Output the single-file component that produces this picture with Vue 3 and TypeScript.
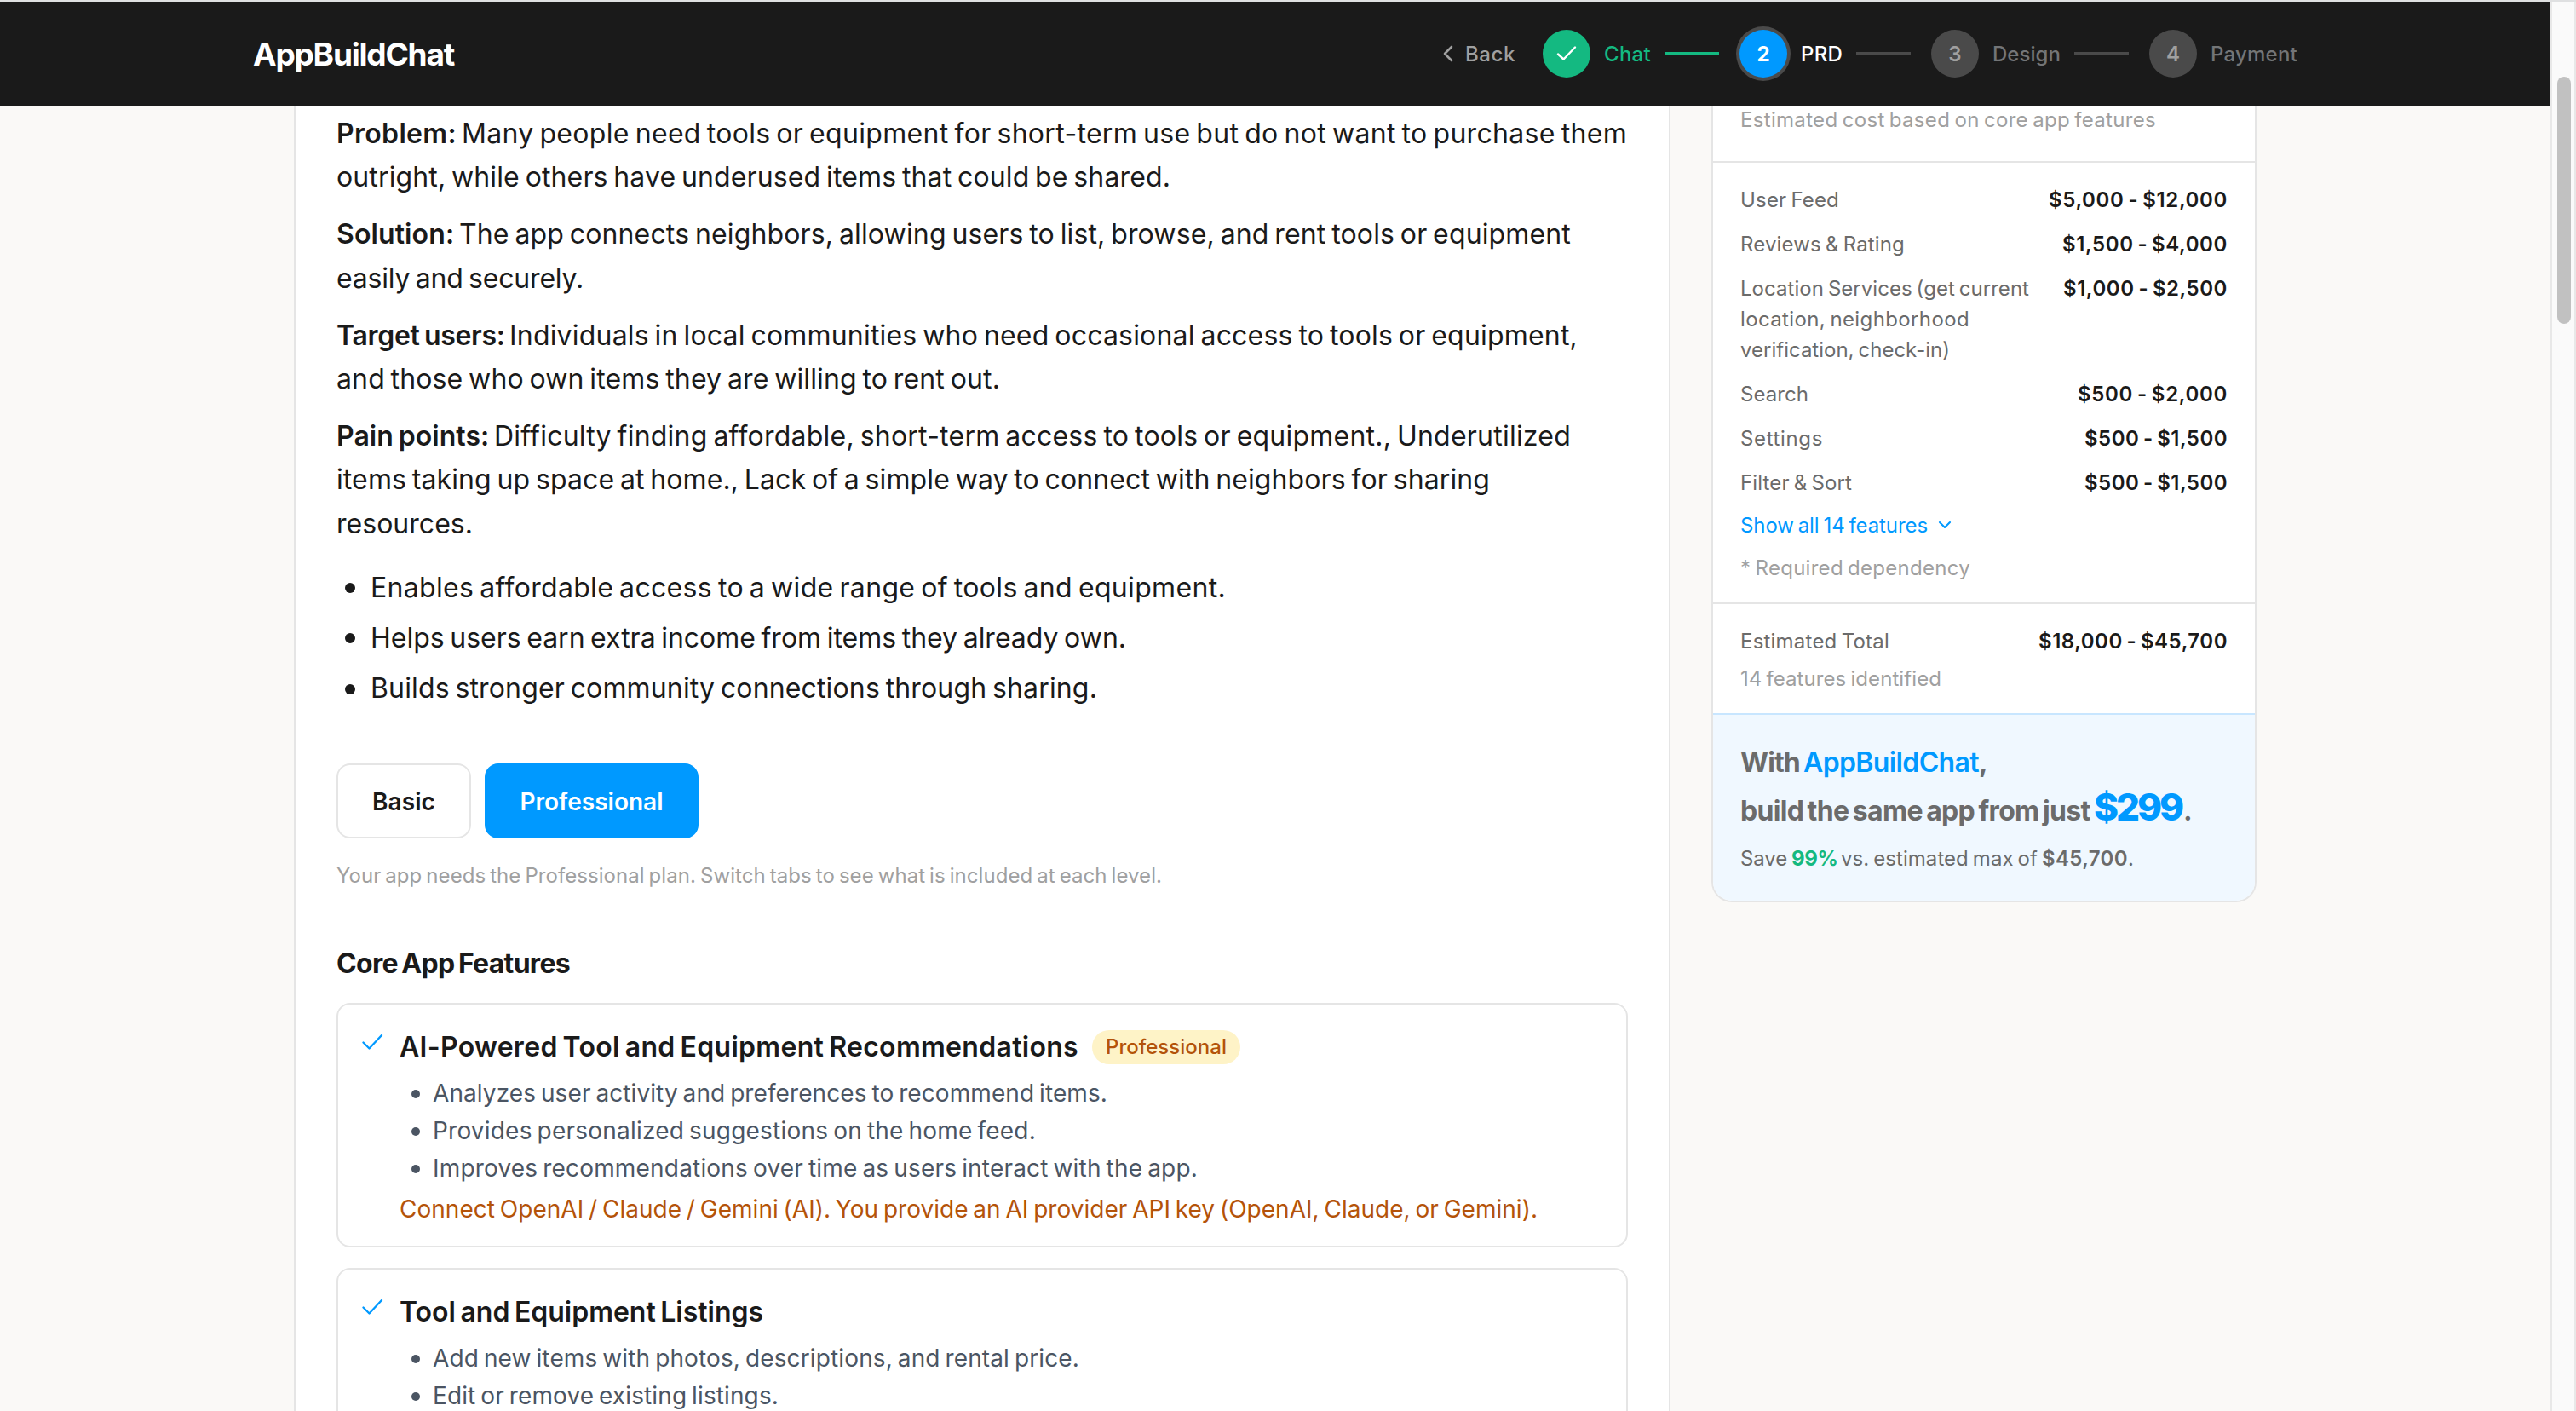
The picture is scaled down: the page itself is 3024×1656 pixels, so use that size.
<script setup lang="ts">
interface Run {
  text: string
  width: number
  strong?: boolean
}

interface Step {
  mark: string
  label: string
  width: number
  state: 'done' | 'current' | 'pending'
}

interface Feature {
  title: string
  titleWidth: number
  badge?: string
  points: Run[]
  note?: Run
}

interface CostRow {
  name: Run[]
  price: string
  width: number
}

// Tracks a run of text so that it takes up the given measure.
const vFit = {
  mounted(el: HTMLElement, binding: { value: number }) {
    const natural = el.getBoundingClientRect().width
    const count = (el.textContent ?? '').length
    if (count > 0) {
      el.style.letterSpacing = `${((binding.value - natural) / count).toFixed(4)}px`
    }
  },
}

const steps: Step[] = [
  { mark: '', label: 'Chat', width: 55, state: 'done' },
  { mark: '2', label: 'PRD', width: 49, state: 'current' },
  { mark: '3', label: 'Design', width: 80, state: 'pending' },
  { mark: '4', label: 'Payment', width: 102, state: 'pending' },
]

const paragraphs: Run[][][] = [
  [
    [
      { text: 'Problem: ', width: 147, strong: true },
      { text: 'Many people need tools or equipment for short-term use but do not want to purchase them', width: 1368 },
    ],
    [{ text: 'outright, while others have underused items that could be shared.', width: 979 }],
  ],
  [
    [
      { text: 'Solution: ', width: 144, strong: true },
      { text: 'The app connects neighbors, allowing users to list, browse, and rent tools or equipment', width: 1305 },
    ],
    [{ text: 'easily and securely.', width: 290 }],
  ],
  [
    [
      { text: 'Target users: ', width: 203, strong: true },
      { text: 'Individuals in local communities who need occasional access to tools or equipment,', width: 1254 },
    ],
    [{ text: 'and those who own items they are willing to rent out.', width: 779 }],
  ],
  [
    [
      { text: 'Pain points: ', width: 185, strong: true },
      { text: 'Difficulty finding affordable, short-term access to tools or equipment., Underutilized', width: 1264 },
    ],
    [{ text: 'items taking up space at home., Lack of a simple way to connect with neighbors for sharing', width: 1354 }],
    [{ text: 'resources.', width: 160 }],
  ],
]

const benefits: Run[] = [
  { text: 'Enables affordable access to a wide range of tools and equipment.', width: 1004 },
  { text: 'Helps users earn extra income from items they already own.', width: 887 },
  { text: 'Builds stronger community connections through sharing.', width: 853 },
]

const features: Feature[] = [
  {
    title: 'AI-Powered Tool and Equipment Recommendations',
    titleWidth: 797,
    badge: 'Professional',
    points: [
      { text: 'Analyzes user activity and preferences to recommend items.', width: 792 },
      { text: 'Provides personalized suggestions on the home feed.', width: 708 },
      { text: 'Improves recommendations over time as users interact with the app.', width: 898 },
    ],
    note: {
      text: 'Connect OpenAI / Claude / Gemini (AI). You provide an AI provider API key (OpenAI, Claude, or Gemini).',
      width: 1336,
    },
  },
  {
    title: 'Tool and Equipment Listings',
    titleWidth: 427,
    points: [
      { text: 'Add new items with photos, descriptions, and rental price.', width: 759 },
      { text: 'Edit or remove existing listings.', width: 406 },
    ],
  },
]

const costs: CostRow[] = [
  { name: [{ text: 'User Feed', width: 116 }], price: '$5,000 - $12,000', width: 210 },
  { name: [{ text: 'Reviews & Rating', width: 193 }], price: '$1,500 - $4,000', width: 194 },
  {
    name: [
      { text: 'Location Services (get current', width: 339 },
      { text: 'location, neighborhood', width: 269 },
      { text: 'verification, check-in)', width: 246 },
    ],
    price: '$1,000 - $2,500',
    width: 193,
  },
  { name: [{ text: 'Search', width: 80 }], price: '$500 - $2,000', width: 176 },
  { name: [{ text: 'Settings', width: 97 }], price: '$500 - $1,500', width: 168 },
  { name: [{ text: 'Filter & Sort', width: 131 }], price: '$500 - $1,500', width: 168 },
]
</script>

<template>
  <div class="window">
    <div class="page">
      <header class="topbar">
        <div class="topbar-inner">
          <span v-fit="236" class="brand">AppBuildChat</span>
          <nav class="stepper">
            <a class="back">
              <svg class="back-icon" width="16" height="22" viewBox="0 0 16 22" fill="none">
                <path d="M12 3 L4 11 L12 19" stroke="currentColor" stroke-width="2.6" stroke-linecap="round" stroke-linejoin="round" />
              </svg>
              <span v-fit="59" class="back-label">Back</span>
            </a>
            <div v-for="(step, i) in steps" :key="step.label" class="step" :class="step.state">
              <span class="dot">
                <svg v-if="step.state === 'done'" width="28" height="28" viewBox="0 0 28 28" fill="none">
                  <path d="M4 14.5 L10.5 20.5 L24 6.5" stroke="#fff" stroke-width="2.4" stroke-linecap="round" stroke-linejoin="round" />
                </svg>
                <span v-else class="mark">{{ step.mark }}</span>
              </span>
              <span v-fit="step.width" class="step-label">{{ step.label }}</span>
              <span v-if="i < steps.length - 1" class="bar"></span>
            </div>
          </nav>
        </div>
      </header>

      <main class="content">
        <article class="doc">
          <div v-for="(para, p) in paragraphs" :key="p" class="para">
            <div v-for="(line, l) in para" :key="l" class="line">
              <span v-for="run in line" :key="run.text" v-fit="run.width" class="run" :class="{ strong: run.strong }">{{ run.text }}</span>
            </div>
          </div>

          <ul class="benefits">
            <li v-for="item in benefits" :key="item.text">
              <span v-fit="item.width" class="run">{{ item.text }}</span>
            </li>
          </ul>

          <div class="tabs">
            <button class="tab basic"><span v-fit="74" class="run">Basic</span></button>
            <button class="tab active"><span v-fit="168" class="run">Professional</span></button>
          </div>
          <p class="hint"><span v-fit="969" class="run">Your app needs the Professional plan. Switch tabs to see what is included at each level.</span></p>

          <h2 class="section"><span v-fit="274" class="run">Core App Features</span></h2>

          <section v-for="feature in features" :key="feature.title" class="feature">
            <svg class="tick" width="26" height="20" viewBox="0 0 26 20" fill="none">
              <path d="M1.5 10.5 L8.5 17.5 L23 2" stroke="#0099ff" stroke-width="2.3" stroke-linecap="round" stroke-linejoin="round" />
            </svg>
            <div class="feature-body">
              <div class="feature-head">
                <h3 v-fit="feature.titleWidth" class="run">{{ feature.title }}</h3>
                <span v-if="feature.badge" class="badge"><span v-fit="142" class="run">{{ feature.badge }}</span></span>
              </div>
              <ul class="points">
                <li v-for="point in feature.points" :key="point.text">
                  <span v-fit="point.width" class="run">{{ point.text }}</span>
                </li>
              </ul>
              <p v-if="feature.note" class="note"><span v-fit="feature.note.width" class="run">{{ feature.note.text }}</span></p>
            </div>
          </section>
        </article>

        <aside class="estimate">
          <div class="estimate-head"><span v-fit="488" class="run">Estimated cost based on core app features</span></div>
          <div class="estimate-list">
            <div v-for="row in costs" :key="row.name[0].text" class="cost">
              <div class="cost-name">
                <div v-for="line in row.name" :key="line.text"><span v-fit="line.width" class="run">{{ line.text }}</span></div>
              </div>
              <span v-fit="row.width" class="run price">{{ row.price }}</span>
            </div>
            <a class="show-all">
              <span v-fit="220" class="run">Show all 14 features</span>
              <svg width="16" height="12" viewBox="0 0 16 12" fill="none">
                <path d="M2 2 L8 8 L14 2" stroke="currentColor" stroke-width="2.1" stroke-linecap="round" stroke-linejoin="round" />
              </svg>
            </a>
            <div class="muted required"><span v-fit="270" class="run">* Required dependency</span></div>
          </div>
          <div class="estimate-total">
            <div class="cost">
              <div class="cost-name"><span v-fit="175" class="run">Estimated Total</span></div>
              <span v-fit="222" class="run price">$18,000 - $45,700</span>
            </div>
            <div class="muted identified"><span v-fit="236" class="run">14 features identified</span></div>
          </div>
          <div class="offer">
            <div class="offer-line">
              <span v-fit="74" class="run">With </span><span v-fit="206" class="run product">AppBuildChat</span><span>,</span>
            </div>
            <div class="offer-line">
              <span v-fit="415" class="run">build the same app from just </span><span v-fit="103" class="run amount">$299</span><span>.</span>
            </div>
            <div class="saving">
              <span v-fit="60" class="run">Save </span><span v-fit="58" class="run percent">99% </span><span v-fit="236" class="run">vs. estimated max of </span><span v-fit="101" class="run max">$45,700</span><span>.</span>
            </div>
          </div>
        </aside>
      </main>
    </div>
    <div class="scrollbar"><div class="thumb"></div></div>
  </div>
</template>

<style>
body {
  background: #faf9f7;
  overflow: hidden;
}
</style>

<style scoped>
.window {
  box-sizing: border-box;
  display: flex;
  width: 3024px;
  height: 1656px;
  border-top: 2px solid #dfe0e1;
  overflow: hidden;
  font-family: Inter, 'Liberation Sans', sans-serif;
  color: #1a1a1a;
}
.window * {
  box-sizing: border-box;
}
.page {
  display: flex;
  flex-direction: column;
  width: 2994px;
  height: 1654px;
  background: #faf9f7;
}
.run {
  display: inline-block;
  flex: none;
  white-space: pre;
  word-spacing: -0.075em;
}
.strong {
  font-weight: 600;
}

/* top bar */
.topbar {
  flex: none;
  display: flex;
  justify-content: center;
  height: 122px;
  background: #1a1a1a;
}
.topbar-inner {
  display: flex;
  align-items: center;
  justify-content: space-between;
  width: 2400px;
}
.brand {
  padding-top: 1px;
  font-size: 37px;
  font-weight: 700;
  color: #fff;
  line-height: 48px;
}
.stepper,
.step,
.back {
  display: flex;
  align-items: center;
}
.stepper {
  font-size: 24px;
  line-height: 36px;
}
.back {
  margin-right: 32px;
  gap: 12px;
  color: #a0a0a0;
  font-weight: 500;
}
.back-label,
.step-label,
.mark {
  padding-top: 2px;
}
.dot {
  display: flex;
  align-items: center;
  justify-content: center;
  width: 56px;
  height: 56px;
  margin-right: 16px;
  border-radius: 50%;
  background: #4a4a4a;
  color: #a0a0a0;
  font-weight: 600;
}
.step-label {
  font-weight: 500;
  color: #737577;
}
.bar {
  width: 64px;
  height: 4px;
  margin: 0 24px 0 16px;
  background: #4a4a4a;
}
.done .dot,
.done .bar {
  background: #14b981;
}
.done .step-label {
  color: #14b981;
}
.current .dot {
  background: #0099ff;
  color: #fff;
  font-weight: 700;
  box-shadow: 0 0 0 4px #4a4a4a;
}
.current .step-label {
  color: #fff;
}

/* columns */
.content {
  flex: 1;
  display: flex;
  justify-content: center;
  align-items: flex-start;
  gap: 48px;
  min-height: 0;
  overflow: hidden;
}
.doc {
  width: 1616px;
  min-height: 1532px;
  padding: 7px 48px 0;
  border: solid #e5e5e5;
  border-width: 0 2px;
  background: #fff;
  font-size: 32px;
  line-height: 51.2px;
}
.para {
  margin-bottom: 16px;
}
.line {
  display: flex;
  height: 51.2px;
}
.benefits {
  margin: 24px 0 0;
  padding: 0;
  list-style: none;
}
.benefits li {
  display: flex;
  align-items: center;
  height: 51.2px;
}
.benefits li + li {
  margin-top: 8px;
}
.benefits li::before {
  content: '';
  width: 12px;
  height: 12px;
  margin: 2px 18px 0 10px;
  border-radius: 50%;
  background: #1a1a1a;
}

/* plan tabs */
.tabs {
  display: flex;
  gap: 16px;
  margin-top: 62.6px;
}
.tab {
  display: flex;
  align-items: center;
  justify-content: center;
  height: 88px;
  padding: 2px 0 0;
  border: 2px solid #e5e5e5;
  border-radius: 16px;
  background: #fff;
  font: 600 28px/40px Inter, sans-serif;
  color: #1a1a1a;
}
.basic {
  width: 158px;
}
.active {
  width: 251px;
  border-color: #0099ff;
  background: #0099ff;
  color: #fff;
}
.hint {
  margin: 26px 0 0;
  height: 36px;
  font-size: 24px;
  line-height: 36px;
  color: #a0a0a0;
}
.section {
  margin: 65.5px 0 25.5px;
  height: 40px;
  font-size: 32px;
  font-weight: 700;
  line-height: 40px;
}

/* feature cards */
.feature {
  display: flex;
  align-items: flex-start;
  margin-bottom: 24px;
  padding: 28px 26px 21px 28px;
  border: 2px solid #e5e5e5;
  border-radius: 16px;
  font-size: 28px;
  line-height: 44px;
}
.tick {
  flex: none;
  margin: 6px 18px 0 0;
}
.feature-head {
  display: flex;
  align-items: center;
  gap: 16px;
  height: 44px;
}
.feature-head h3 {
  margin: 0;
  font-size: 32px;
  font-weight: 600;
}
.badge {
  display: flex;
  align-items: center;
  height: 40px;
  padding: 1px 16px 0;
  border-radius: 20px;
  background: #fef3c7;
  font-size: 24px;
  font-weight: 500;
  line-height: 40px;
  color: #b45309;
}
.points {
  margin: 10px 0 0;
  padding: 0;
  list-style: none;
  color: #4b5563;
}
.points li {
  display: flex;
  align-items: center;
  height: 44px;
}
.points li::before {
  content: '';
  width: 10px;
  height: 10px;
  margin: 2px 15px 0 14px;
  border-radius: 50%;
  background: #4b5563;
}
.note {
  margin: 4px 0 0;
  height: 44px;
  color: #b45309;
}

/* cost estimate */
.estimate {
  width: 640px;
  border: 2px solid #e5e5e5;
  border-top: 0;
  border-radius: 0 0 24px 24px;
  background: #fff;
  overflow: hidden;
  font-size: 24px;
  line-height: 36px;
}
.estimate-head {
  height: 67px;
  padding: 0 32px;
  border-bottom: 2px solid #e5e5e5;
  line-height: 34px;
  color: #a0a0a0;
}
.estimate-list {
  height: 518px;
  padding: 26px 32px 0;
  border-bottom: 2px solid #e5e5e5;
}
.cost {
  display: flex;
  justify-content: space-between;
  align-items: flex-start;
}
.estimate-list .cost {
  margin-bottom: 16px;
}
.cost-name {
  color: #6b6b6b;
}
.cost-name > div {
  height: 36px;
}
.cost-name,
.price {
  min-height: 36px;
}
.price {
  font-weight: 600;
}
.show-all {
  display: flex;
  align-items: center;
  gap: 12px;
  height: 36px;
  margin-top: -2px;
  color: #0099ff;
}
.muted {
  height: 36px;
  color: #a0a0a0;
}
.required {
  margin-top: 14px;
}
.estimate-total {
  height: 128px;
  padding: 26px 32px 0;
}
.identified {
  margin-top: 8px;
}
.offer {
  height: 220px;
  padding: 27.6px 32px 0;
  border-top: 2px solid #c8e6ff;
  background: #f0f8ff;
  color: #6b6b6b;
}
.offer-line {
  display: flex;
  align-items: baseline;
  height: 56px;
  font-size: 32px;
  font-weight: 700;
  line-height: 56px;
}
.product {
  font-weight: 600;
  color: #0099ff;
}
.amount {
  margin-right: 2px;
  font-size: 44px;
  font-weight: 800;
  color: #0099ff;
  line-height: 48px;
}
.saving {
  display: flex;
  margin-top: 11.4px;
}
.percent {
  font-weight: 700;
  color: #14b981;
}
.max {
  font-weight: 600;
}

/* window scrollbar */
.scrollbar {
  width: 30px;
  padding: 88px 0 0 6px;
  border: solid #e8e8e8;
  border-width: 0 2px;
  background: #fafafa;
}
.thumb {
  width: 16px;
  height: 290px;
  border-radius: 8px;
  background: #c1c1c1;
}
</style>
